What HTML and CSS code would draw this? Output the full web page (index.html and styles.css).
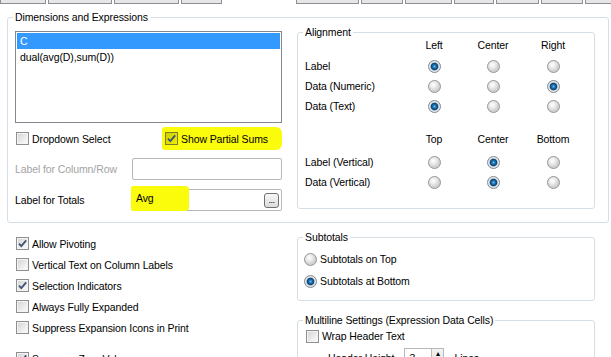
FILE: index.html
```html
<!DOCTYPE html>
<html>
<head>
    <meta charset="UTF-8" />
    <title>Pivot Table Properties - Presentation</title>
    <link rel="stylesheet" href="styles.css">
</head>
<body>
    <div class="tabs">
        <div class="tab-group">
            <span class="tab"></span><span class="tab"></span><span class="tab"></span><span class="tab"></span>
        </div>
        <div class="tab-group right">
            <span class="tab"></span><span class="tab"></span><span class="tab"></span><span class="tab"></span><span class="tab"></span><span class="tab"></span><span class="tab"></span>
        </div>
    </div>

    <div class="page">
        <fieldset class="group outer">
            <legend>Dimensions and Expressions</legend>
            <div class="outer-body">
                <div class="left-col">
                    <div class="listbox">
                        <div class="item selected">C</div>
                        <div class="item">dual(avg(D),sum(D))</div>
                    </div>
                    <div class="check-row">
                        <label class="check"><span class="cb"></span>Dropdown Select</label>
                        <label class="check highlight"><span class="cb on yellow"><svg class="tick" viewBox="0 0 11 11"><path d="M2 5.6l2.3 2.6L9.2 2.4"/></svg></span>Show Partial Sums</label>
                    </div>
                    <div class="field-row">
                        <span class="disabled">Label for Column/Row</span>
                        <div class="textbox"></div>
                    </div>
                    <div class="field-row totals">
                        <span>Label for Totals</span>
                        <div class="textbox">
                            <span class="marker">Avg</span>
                            <span class="dots">...</span>
                        </div>
                    </div>
                </div>

                <fieldset class="group align">
                    <legend>Alignment</legend>
                    <div class="align-grid">
                        <span></span><span class="head">Left</span><span class="head">Center</span><span class="head">Right</span>
                        <span>Label</span><span class="rb on"></span><span class="rb"></span><span class="rb"></span>
                        <span>Data (Numeric)</span><span class="rb"></span><span class="rb"></span><span class="rb on"></span>
                        <span>Data (Text)</span><span class="rb on"></span><span class="rb"></span><span class="rb"></span>
                    </div>
                    <div class="align-grid vertical">
                        <span></span><span class="head">Top</span><span class="head">Center</span><span class="head">Bottom</span>
                        <span>Label (Vertical)</span><span class="rb"></span><span class="rb on"></span><span class="rb"></span>
                        <span>Data (Vertical)</span><span class="rb"></span><span class="rb on"></span><span class="rb"></span>
                    </div>
                </fieldset>
            </div>
        </fieldset>

        <div class="lower">
            <div class="options">
                <label class="check opt"><span class="cb on"><svg class="tick" viewBox="0 0 11 11"><path d="M2 5.6l2.3 2.6L9.2 2.4"/></svg></span>Allow Pivoting</label>
                <label class="check opt"><span class="cb"></span>Vertical Text on Column Labels</label>
                <label class="check opt"><span class="cb on"><svg class="tick" viewBox="0 0 11 11"><path d="M2 5.6l2.3 2.6L9.2 2.4"/></svg></span>Selection Indicators</label>
                <label class="check opt"><span class="cb"></span>Always Fully Expanded</label>
                <label class="check opt"><span class="cb"></span>Suppress Expansion Icons in Print</label>
                <label class="check opt spaced"><span class="cb on"><svg class="tick" viewBox="0 0 11 11"><path d="M2 5.6l2.3 2.6L9.2 2.4"/></svg></span>Suppress Zero Values</label>
            </div>
            <div class="side">
                <fieldset class="group subtotals">
                    <legend>Subtotals</legend>
                    <label class="radio-row"><span class="rb"></span>Subtotals on Top</label>
                    <label class="radio-row"><span class="rb on"></span>Subtotals at Bottom</label>
                </fieldset>
                <fieldset class="group multiline">
                    <legend>Multiline Settings (Expression Data Cells)</legend>
                    <label class="check wrap"><span class="cb"></span>Wrap Header Text</label>
                    <div class="height-row">
                        <span>Header Height</span>
                        <span class="spin"><span class="spin-val">3</span><span class="spin-btn">&#9652;</span></span>
                        <span>Lines</span>
                    </div>
                </fieldset>
            </div>
        </div>
    </div>
</body>
</html>
```

FILE: styles.css
```css
* {
    box-sizing: border-box;
}
body {
    margin: 0;
    width: 611px;
    height: 357px;
    overflow: hidden;
    background: #ffffff;
    color: #000000;
    font-family: 'Liberation Sans', Arial, sans-serif;
    font-size: 10.5px;
    letter-spacing: -0.1px;
}

/* tab strip (only the bottom edge is visible) */
.tabs {
    display: flex;
    height: 4px;
}
.tab-group {
    display: flex;
    gap: 2px;
}
.tab-group.right {
    margin-left: 74px;
}
.tab {
    height: 4px;
    background: #e6e6e6;
    border: 1px solid #8c8f96;
    border-top: none;
}
.tab-group .tab:nth-child(1) { width: 46px; }
.tab-group .tab:nth-child(2) { width: 64px; }
.tab-group .tab:nth-child(3) { width: 65px; }
.tab-group .tab:nth-child(4) { width: 41px; }
.tab-group.right .tab:nth-child(1) { width: 63px; }
.tab-group.right .tab:nth-child(2) { width: 42px; }
.tab-group.right .tab:nth-child(3) { width: 47px; }
.tab-group.right .tab:nth-child(4) { width: 40px; }
.tab-group.right .tab:nth-child(5) { width: 43px; }
.tab-group.right .tab:nth-child(6) { width: 42px; }
.tab-group.right .tab:nth-child(7) { width: 40px; }

.page {
    padding-left: 7px;
}

/* group boxes */
.group {
    margin: 0;
    min-width: 0;
    border: 1px solid #d5dfe5;
    border-radius: 3px;
    padding: 0 0 0 7px;
}
.group > legend {
    margin-left: -2px;
    padding: 0 2px;
    line-height: 13px;
}
.outer {
    width: 602px;
    margin-top: 7px;
    padding: 0 13px 11px 7px;
}
.outer-body {
    display: flex;
    align-items: flex-start;
    gap: 15px;
}

/* left column */
.left-col {
    width: 267px;
}
.listbox {
    margin-top: 7px;
    height: 92px;
    border: 1px solid #828790;
    padding: 1px;
}
.item {
    height: 16px;
    line-height: 16px;
    padding-left: 3px;
}
.item.selected {
    background: #3399ff;
    color: #ffffff;
}
.check-row {
    margin-top: 4px;
    height: 23px;
    display: flex;
    align-items: center;
    justify-content: space-between;
}
.check {
    display: flex;
    align-items: center;
    gap: 3px;
}
.check-row .check:first-child {
    margin-left: 1px;
}
.highlight {
    width: 120px;
    height: 23px;
    padding-left: 3px;
    background: #fbfb0c;
    border-radius: 3px 6px 6px 3px;
}
.field-row {
    margin-top: 8px;
    height: 22px;
    display: flex;
    align-items: center;
    justify-content: space-between;
}
.field-row.totals {
    margin-top: 9px;
}
.disabled {
    color: #a3a3a3;
}
.textbox {
    position: relative;
    width: 150px;
    height: 22px;
    border: 1px solid #b5b8bd;
    border-radius: 2px;
    display: flex;
    align-items: center;
    justify-content: flex-end;
    padding-right: 2px;
}
.marker {
    position: absolute;
    left: -2px;
    top: -4px;
    width: 58px;
    height: 25px;
    line-height: 25px;
    padding-left: 5px;
    background: #fbfb0c;
    border-radius: 2px 4px 4px 2px;
}
.dots {
    width: 15px;
    height: 15px;
    border: 1px solid #707070;
    border-radius: 3px;
    background: linear-gradient(#f7f7f7, #dcdcdc);
    font-size: 9px;
    line-height: 13px;
    text-align: center;
    letter-spacing: -0.5px;
}

/* checkboxes and radio buttons */
.cb {
    flex: none;
    width: 13px;
    height: 13px;
    border: 1px solid #8e8f8f;
    background: linear-gradient(135deg, #d2d2d2, #f2f2f2 70%, #fbfbfb);
    box-shadow: inset 0 0 0 1px #f4f4f4;
    display: flex;
}
.cb.yellow {
    border-color: #7d7d30;
    background: linear-gradient(135deg, #cfcf00, #eded00);
    box-shadow: none;
}
.tick {
    width: 11px;
    height: 11px;
}
.tick path {
    fill: none;
    stroke: #3f5278;
    stroke-width: 1.8;
}
.rb {
    width: 13px;
    height: 13px;
    border-radius: 50%;
    border: 1px solid #959595;
    background: radial-gradient(circle at 40% 35%, #ffffff 0, #ececec 3px, #d0d0d0 6px);
    justify-self: center;
    align-self: center;
}
.rb.on {
    border-color: #7d8a96;
    background: radial-gradient(circle, #66bdf0 0, #1f76b8 1.6px, #0c3d6a 3.3px, #b8c6d3 4.1px, #ececec 4.8px, #d3d3d3 6px);
}

/* alignment grid */
.align {
    width: 298px;
    margin-top: 2px;
    padding-bottom: 16px;
}
.align-grid {
    display: grid;
    grid-template-columns: 99px 60px 58px 62px;
    grid-template-rows: 17px repeat(3, 20px);
    align-items: center;
}
.align-grid.vertical {
    margin-top: 17px;
    grid-template-rows: 19px repeat(2, 20px);
}
.head {
    align-self: start;
    text-align: center;
    line-height: 13px;
}

/* lower area */
.lower {
    display: flex;
    align-items: flex-start;
}
.options {
    width: 290px;
    padding: 10px 0 0 9px;
}
.opt {
    height: 21px;
}
.opt.spaced {
    margin-top: 10px;
}
.side {
    width: 298px;
}
.subtotals {
    margin-top: 8px;
    padding-top: 4px;
    padding-bottom: 8px;
}
.radio-row {
    display: flex;
    align-items: center;
    gap: 3px;
    height: 22px;
    margin-left: -1px;
}
.multiline {
    margin-top: 13px;
    height: 60px;
}
.wrap {
    height: 18px;
    margin-left: 1px;
}
.height-row {
    margin-top: 3px;
    padding-left: 23px;
    display: flex;
    align-items: center;
    gap: 10px;
    height: 20px;
}
.spin {
    display: flex;
    width: 40px;
    height: 20px;
    border: 1px solid #b5b8bd;
}
.spin-val {
    flex: 1;
    padding-left: 4px;
    line-height: 18px;
}
.spin-btn {
    width: 12px;
    border-left: 1px solid #b5b8bd;
    background: linear-gradient(#f4f4f4, #dedede);
    font-size: 8px;
    line-height: 10px;
    text-align: center;
}
```
